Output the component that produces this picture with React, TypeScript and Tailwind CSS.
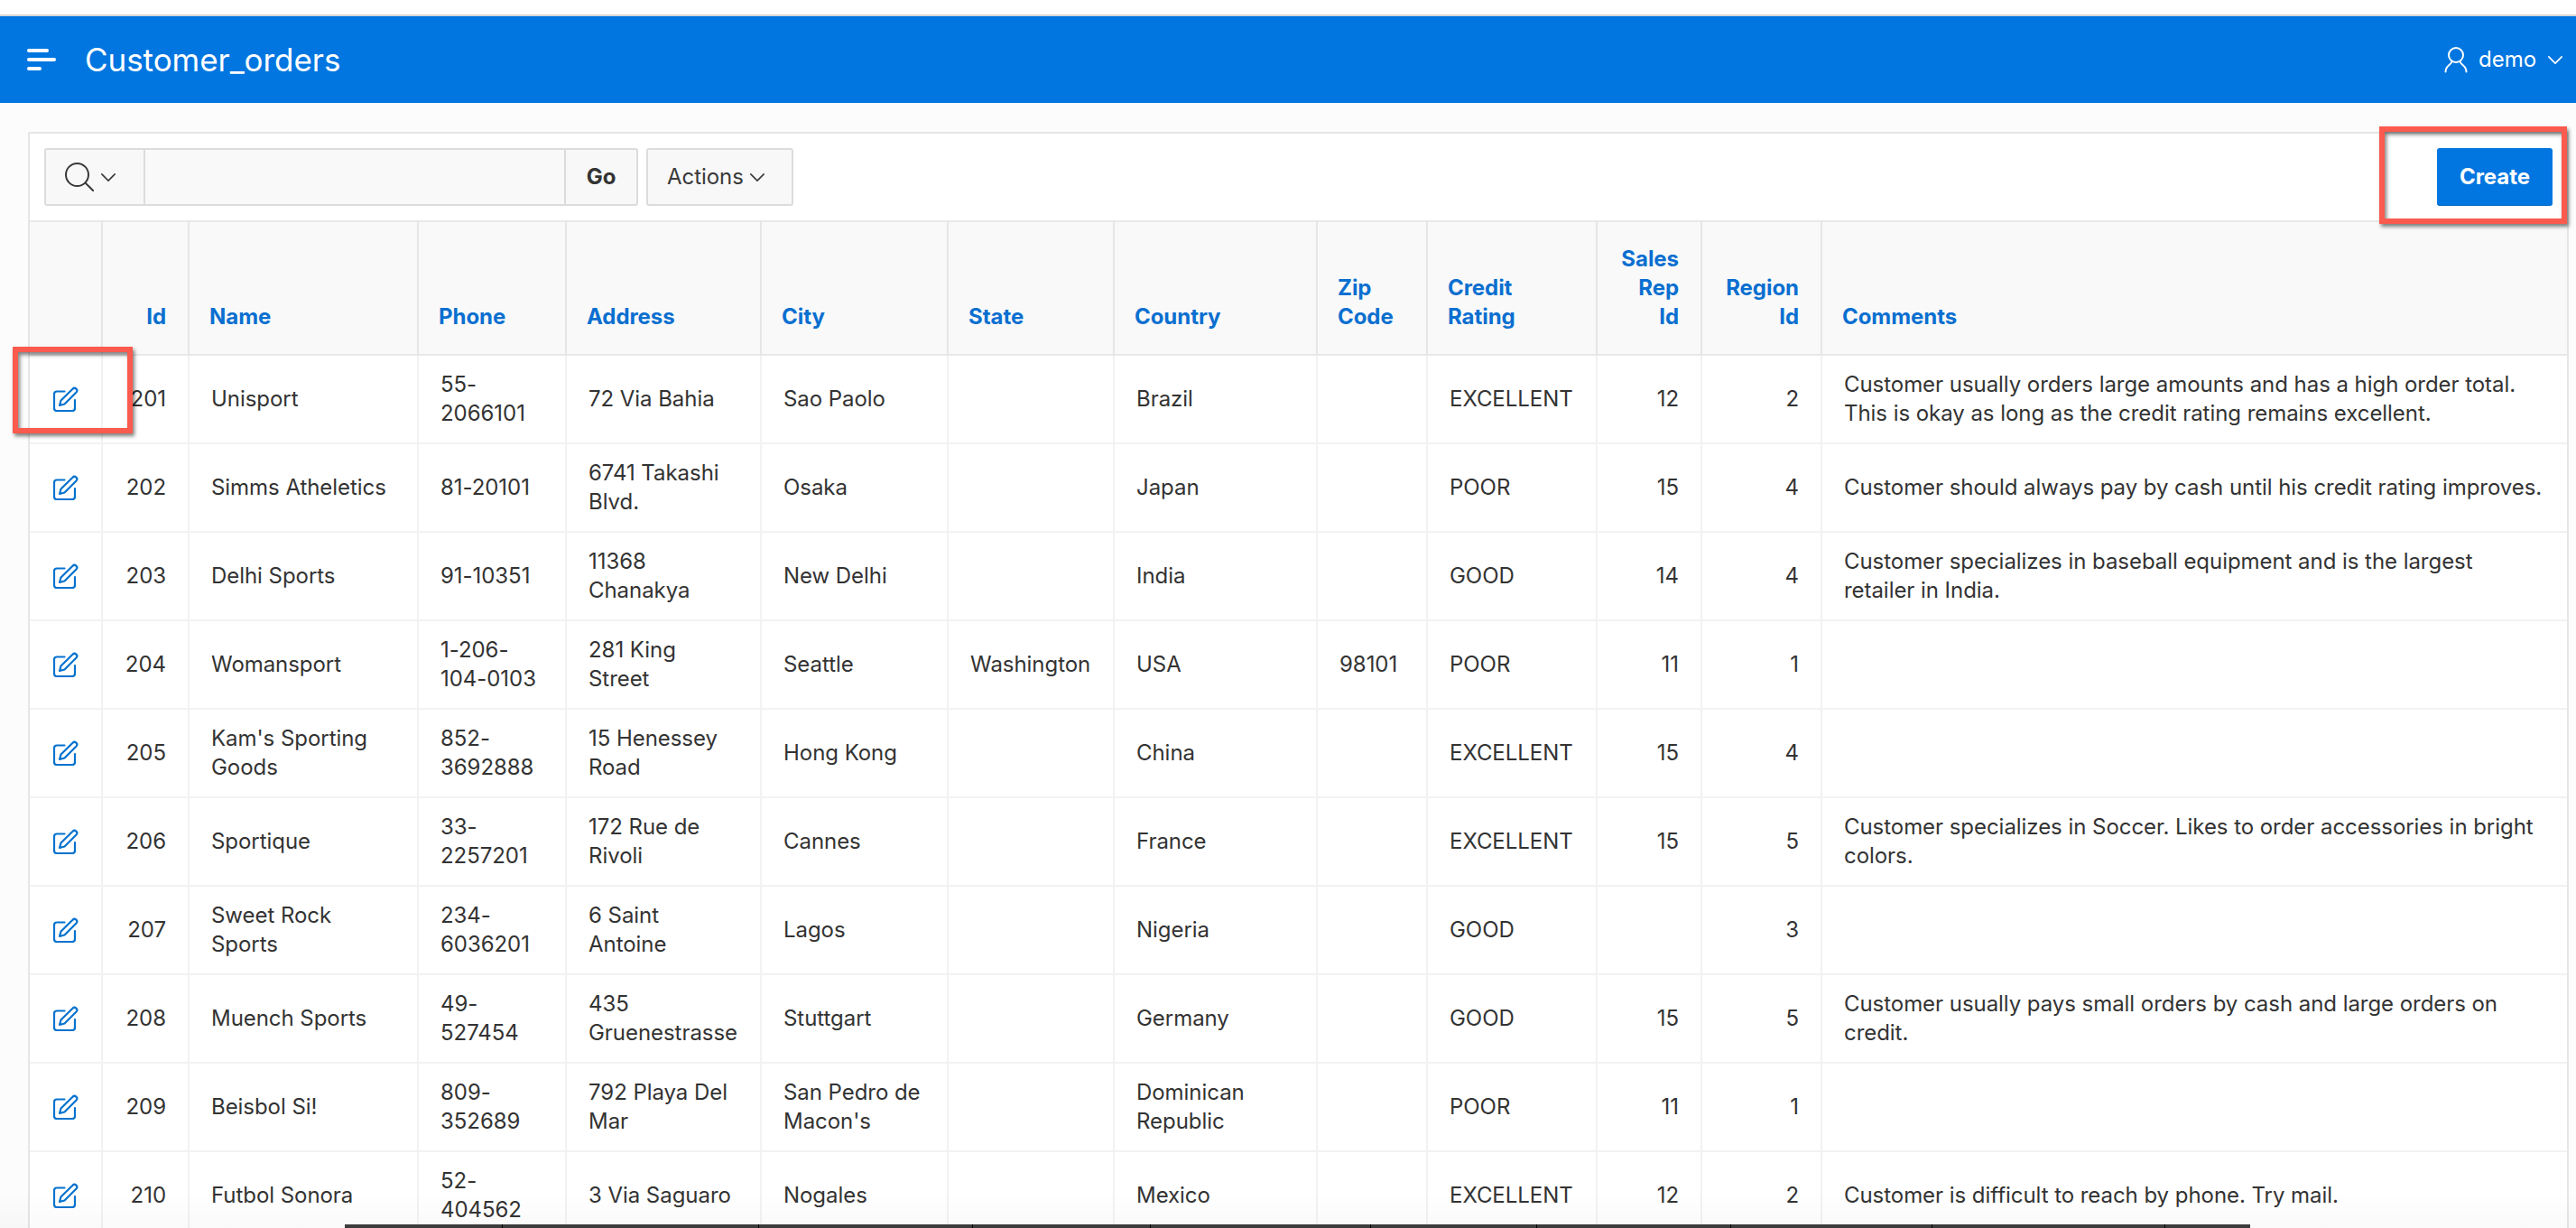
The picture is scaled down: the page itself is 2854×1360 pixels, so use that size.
const rows = [
  ['201', 'Unisport', '55-2066101', '72 Via Bahia', 'Sao Paolo', '', 'Brazil', '', 'EXCELLENT', '12', '2', 'Customer usually orders large amounts and has a high order total. This is okay as long as the credit rating remains excellent.'],
  ['202', 'Simms Atheletics', '81-20101', '6741 Takashi Blvd.', 'Osaka', '', 'Japan', '', 'POOR', '15', '4', 'Customer should always pay by cash until his credit rating improves.'],
  ['203', 'Delhi Sports', '91-10351', '11368 Chanakya', 'New Delhi', '', 'India', '', 'GOOD', '14', '4', 'Customer specializes in baseball equipment and is the largest retailer in India.'],
  ['204', 'Womansport', '1-206-104-0103', '281 King Street', 'Seattle', 'Washington', 'USA', '98101', 'POOR', '11', '1', ''],
  ['205', "Kam's Sporting Goods", '852-3692888', '15 Henessey Road', 'Hong Kong', '', 'China', '', 'EXCELLENT', '15', '4', ''],
  ['206', 'Sportique', '33-2257201', '172 Rue de Rivoli', 'Cannes', '', 'France', '', 'EXCELLENT', '15', '5', 'Customer specializes in Soccer. Likes to order accessories in bright colors.'],
  ['207', 'Sweet Rock Sports', '234-6036201', '6 Saint Antoine', 'Lagos', '', 'Nigeria', '', 'GOOD', '', '3', ''],
  ['208', 'Muench Sports', '49-527454', '435 Gruenestrasse', 'Stuttgart', '', 'Germany', '', 'GOOD', '15', '5', 'Customer usually pays small orders by cash and large orders on credit.'],
  ['209', 'Beisbol Si!', '809-352689', '792 Playa Del Mar', "San Pedro de Macon's", '', 'Dominican Republic', '', 'POOR', '11', '1', ''],
  ['210', 'Futbol Sonora', '52-404562', '3 Via Saguaro', 'Nogales', '', 'Mexico', '', 'EXCELLENT', '12', '2', 'Customer is difficult to reach by phone. Try mail.'],
]

const headers = [
  { label: 'Id', right: true },
  { label: 'Name' },
  { label: 'Phone' },
  { label: 'Address' },
  { label: 'City' },
  { label: 'State' },
  { label: 'Country' },
  { label: 'Zip Code' },
  { label: 'Credit Rating' },
  { label: 'Sales Rep Id', right: true },
  { label: 'Region Id', right: true },
  { label: 'Comments' },
]

const colClasses = ['w-[80px]', 'w-[96px]', 'w-[254px]', 'w-[164px]', 'w-[216px]', 'w-[207px]', 'w-[184px]', 'w-[225px]', 'w-[122px]', 'w-[188px]', 'w-[116px]', 'w-[133px]', '']
const rightCols = [0, 9, 10]

// bit of a dark window edge peeking in at the bottom of the shot
const barSegments = ['w-[175px]', 'w-[284px]', 'w-[237px]', 'w-[197px]', 'w-[244px]', 'w-[184px]', 'w-[215px]', 'w-[223px]', 'w-[258px]', 'w-[94px]']

function EditIcon() {
  return (
    <svg viewBox="0 0 28 28" fill="none" stroke="currentColor" strokeWidth="2.2" strokeLinecap="round" strokeLinejoin="round" className="w-7 h-7 text-[#0572ce]">
      <path d="M12.5 5.5H4A3 3 0 0 0 1 8.5V24A3 3 0 0 0 4 27H21A3 3 0 0 0 24 24V15" />
      <path d="M7 21L8.5 15.500L21.500 2.800A2.500 2.500 0 0 1 25.500 6.500L12.500 19.500Z" />
    </svg>
  )
}

function Chevron({ className }: { className: string }) {
  return (
    <svg viewBox="0 0 20 12" fill="none" stroke="currentColor" strokeWidth="1.8" strokeLinecap="round" strokeLinejoin="round" className={className}>
      <path d="M2 2L10 10L18 2" />
    </svg>
  )
}

export default function App() {
  return (
    <div className="relative h-[1360px] overflow-hidden bg-[#fcfcfc] font-['Inter',sans-serif] text-[24px] leading-[32px] tracking-[-0.05px] text-[#333]">
      <div className="h-[18px] bg-white border-b-2 border-[#d6d6d6]" />
      <header className="h-[96px] bg-[#0276e0] text-white flex items-center pl-[30px] pr-[14px]">
        <svg viewBox="0 0 32 24" fill="#fff" className="w-8 h-6">
          <rect x="0" y="0" width="24" height="4" rx="2" />
          <rect x="0" y="10" width="32" height="4" rx="2" />
          <rect x="0" y="20" width="16" height="4" rx="2" />
        </svg>
        <div className="ml-[32px] text-[35px] leading-[44px]">Customer_orders</div>
        <div className="ml-auto flex items-center text-[24px]">
          <svg viewBox="0 0 26 30" fill="none" stroke="#fff" strokeWidth="2" strokeLinecap="round" className="w-[26px] h-[30px]">
            <circle cx="13" cy="10" r="8" />
            <path d="M8.500 17C8 21 1.500 21 1.500 28.500M17.500 17C18 21 24.500 21 24.500 28.500" />
          </svg>
          <span className="ml-[12px]">demo</span>
          <Chevron className="w-[18px] h-[11px] ml-[12px]" />
        </div>
      </header>

      <main className="pl-[31px] pr-[8px] pt-[32px]">
        <section className="bg-white border-2 border-b-0 border-[#e6e6e6] rounded-t-[2px]">
          <div className="h-[96px] flex items-center pl-[16px] pr-[16px]">
            <div className="flex h-[64px] w-[658px] border-2 border-[#dcdcdc] rounded-[3px] bg-[#f8f8f8]">
              <div className="w-[110px] flex items-center pl-[21px] border-r-2 border-[#dcdcdc] text-[#3a3a3a]">
                <svg viewBox="0 0 32 32" fill="none" stroke="currentColor" strokeWidth="2" strokeLinecap="round" className="w-8 h-8 shrink-0">
                  <circle cx="13.500" cy="13.500" r="12.500" />
                  <path d="M23 23L31.500 31.500" />
                </svg>
                <Chevron className="w-[18px] h-[11px] ml-[7px]" />
              </div>
              <div className="flex-1 bg-[#f9f9f9]" />
              <div className="w-[80px] flex items-center justify-center border-l-2 border-[#dcdcdc] font-bold text-[#333]">Go</div>
            </div>
            <div className="ml-[9px] h-[64px] w-[163px] flex items-center pl-[21px] border-2 border-[#dcdcdc] rounded-[3px] bg-[#f8f8f8] text-[#3a3a3a]">
              Actions
              <Chevron className="w-[18px] h-[11px] ml-[6px]" />
            </div>
            <button className="ml-auto h-[64px] w-[128px] bg-[#0276e0] text-white font-bold rounded-[3px] border-b border-[#0468c0]">Create</button>
          </div>

          <table className="w-full table-fixed border-collapse">
            <colgroup>
              {colClasses.map((c, i) => <col key={i} className={c} />)}
            </colgroup>
            <thead>
              <tr className="h-[148px] bg-[#f9f9f9] border-y-2 border-[#e9e9e9]">
                <th className="border-r-2 border-[#e6e6e6]" />
                {headers.map((h) => (
                  <th key={h.label} className={`align-bottom pl-[22px] pr-[24px] pb-[25px] font-bold text-[#0a6fd0] border-r-2 last:border-r-0 border-[#e6e6e6] ${h.right ? 'text-right' : 'text-left'}`}>
                    {h.label}
                  </th>
                ))}
              </tr>
            </thead>
            <tbody>
              {rows.map((r) => (
                <tr key={r[0]} className="h-[98px] border-b-2 border-[#f2f2f2]">
                  <td className="border-r-2 border-[#f2f2f2]">
                    <div className="flex justify-center">
                      <EditIcon />
                    </div>
                  </td>
                  {r.map((c, i) => (
                    <td key={i} className={`px-[24px] border-r-2 last:border-r-0 border-[#f2f2f2] ${rightCols.includes(i) ? 'text-right' : ''}`}>
                      {c}
                    </td>
                  ))}
                </tr>
              ))}
            </tbody>
          </table>
        </section>
      </main>

      <div className="absolute left-0 right-0 bottom-0 h-[40px] bg-gradient-to-b from-transparent to-black/[0.02]" />
      <div className="absolute left-[14px] top-[384px] w-[133px] h-[96px] border-[6px] border-[#fb5a4e] shadow-[2px_3px_4px_rgba(0,0,0,0.5),inset_2px_3px_4px_rgba(0,0,0,0.5)]" />
      <div className="absolute left-[2636px] top-[140px] w-[208px] h-[108px] border-[6px] border-[#fb5a4e] shadow-[2px_3px_4px_rgba(0,0,0,0.5),inset_2px_3px_4px_rgba(0,0,0,0.5)]" />
      <div className="absolute left-[382px] top-[1356px] h-[4px] flex">
        {barSegments.map((w, i) => (
          <div key={i} className={`${w} bg-[#3c3c3c] border-r border-black last:border-r-0`} />
        ))}
      </div>
    </div>
  )
}
